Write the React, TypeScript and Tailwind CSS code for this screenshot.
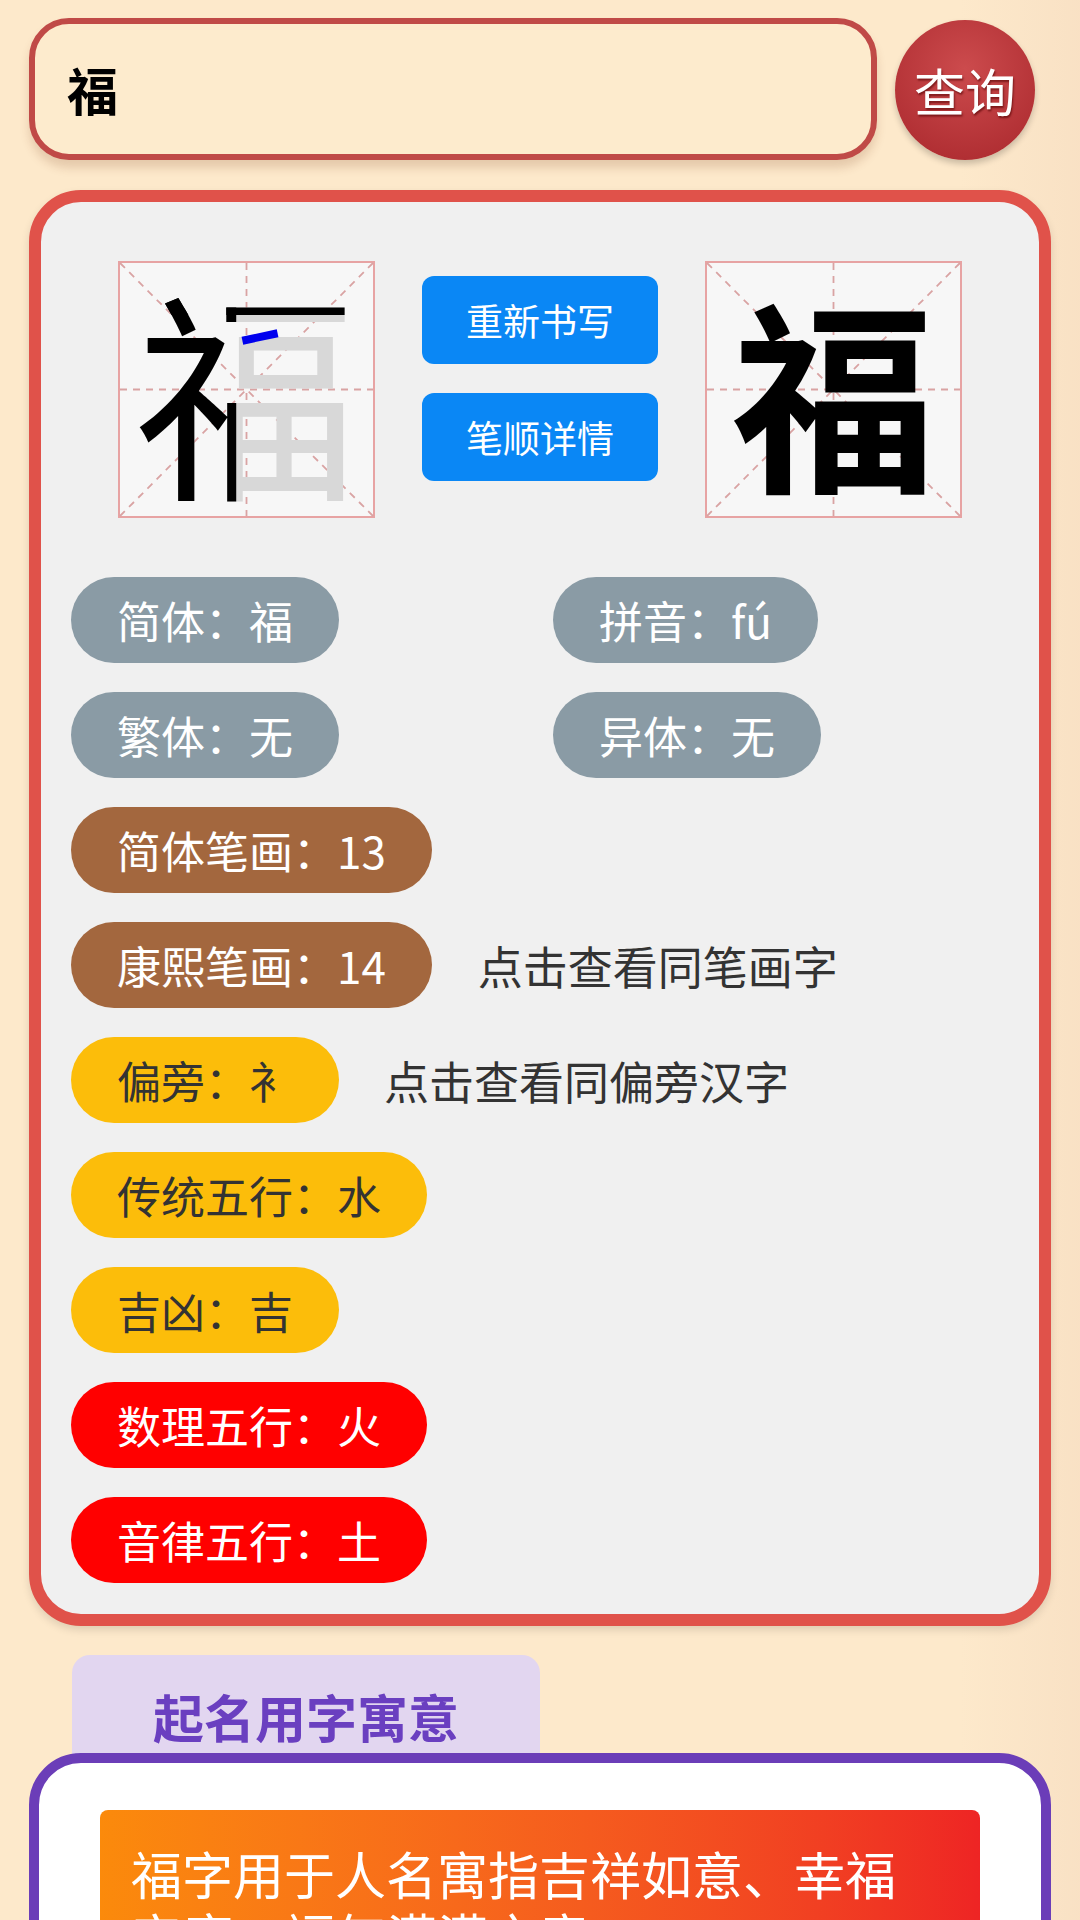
import React from "react";

function GridBox({ children }: { children?: React.ReactNode }) {
  return (
    <div className="relative w-[257px] h-[257px] bg-[#f7f7f7] shrink-0">
      <svg className="absolute inset-0" width="257" height="257" viewBox="0 0 257 257">
        <rect x="1" y="1" width="255" height="255" fill="none" stroke="#e7a3a3" strokeWidth="2" />
        <g stroke="#d9a3a3" strokeWidth="1.8" strokeDasharray="7 6" fill="none">
          <line x1="2" y1="2" x2="255" y2="255" />
          <line x1="255" y1="2" x2="2" y2="255" />
          <line x1="128.5" y1="2" x2="128.5" y2="255" />
          <line x1="2" y1="128.5" x2="255" y2="128.5" />
        </g>
      </svg>
      {children}
    </div>
  );
}

function Pill({ text, color, dark }: { text: string; color: string; dark?: boolean }) {
  return (
    <div
      className={
        "h-[86px] rounded-full px-[46px] flex items-center text-[44px] leading-none whitespace-nowrap " +
        color +
        (dark ? " text-[#333333]" : " text-white")
      }
    >
      {text}
    </div>
  );
}

export default function App() {
  return (
    <div className="w-[1080px] h-[1920px] overflow-hidden bg-[#fde9cb] font-['Noto_Sans_CJK_SC','Noto_Sans',sans-serif] relative">
      {/* faint painting texture on right edge */}
      <div className="absolute right-0 top-0 w-[120px] h-[1920px] bg-gradient-to-l from-[#f6dcc0] to-transparent opacity-60" />

      <div className="relative px-[29px] pt-[18px]">
        {/* search row */}
        <div className="flex items-start gap-[18px]">
          <div className="w-[848px] h-[142px] rounded-[40px] border-[6px] border-[#c04a47] bg-[#fdebcd] shadow-[0_8px_10px_rgba(120,60,30,0.18)] flex items-center pl-[32px]">
            <span className="text-[51px] font-bold text-black leading-none">福</span>
          </div>
          <div className="mt-[2px] w-[140px] h-[140px] rounded-full bg-[radial-gradient(circle_at_50%_35%,#cc4b4d,#a9272c)] shadow-[0_4px_6px_rgba(0,0,0,0.2)] flex items-center justify-center">
            <span className="text-[51px] text-white leading-none [text-shadow:1px_2px_2px_rgba(80,0,0,0.6)]">查询</span>
          </div>
        </div>

        {/* main card */}
        <div className="mt-[30px] h-[1436px] rounded-[52px] border-[12px] border-[#e0524a] bg-[#f0f0f0] shadow-[0_4px_8px_rgba(0,0,0,0.12)]">
          <div className="flex justify-between px-[77px] pt-[59px]">
            <GridBox>
              <div className="absolute inset-0 flex items-center justify-center text-[222px] leading-none text-[#d8d8d8]">
                <span className="-mt-[8px]">福</span>
              </div>
              <div className="absolute inset-0 flex items-center justify-center text-[222px] leading-none text-black [clip-path:inset(0_54%_0_0)]">
                <span className="-mt-[8px]">福</span>
              </div>
              <div className="absolute inset-0 flex items-center justify-center text-[222px] leading-none text-black [clip-path:inset(0_0_79%_0)]">
                <span className="-mt-[8px]">福</span>
              </div>
              <div className="absolute left-[124px] top-[72px] w-[36px] h-[8px] bg-[#0000ee] -rotate-[12deg]" />
            </GridBox>

            <div className="flex flex-col gap-[29px] pt-[15px]">
              <div className="w-[236px] h-[88px] rounded-[12px] bg-[#0a87f5] flex items-center justify-center text-white text-[37px] leading-none">
                重新书写
              </div>
              <div className="w-[236px] h-[88px] rounded-[12px] bg-[#0a87f5] flex items-center justify-center text-white text-[37px] leading-none">
                笔顺详情
              </div>
            </div>

            <GridBox>
              <div className="absolute inset-0 flex items-center justify-center text-[204px] leading-none font-bold text-black">
                <span className="-mt-[4px]">福</span>
              </div>
            </GridBox>
          </div>

          <div className="mt-[59px] pl-[30px] flex flex-col gap-[29px]">
            <div className="grid grid-cols-[482px_auto]">
              <div className="flex">
                <Pill text="简体：福" color="bg-[#8a9ba5]" />
              </div>
              <div className="flex">
                <Pill text="拼音：fú" color="bg-[#8a9ba5]" />
              </div>
            </div>
            <div className="grid grid-cols-[482px_auto]">
              <div className="flex">
                <Pill text="繁体：无" color="bg-[#8a9ba5]" />
              </div>
              <div className="flex">
                <Pill text="异体：无" color="bg-[#8a9ba5]" />
              </div>
            </div>
            <div className="flex">
              <Pill text="简体笔画：13" color="bg-[#a3673e]" />
            </div>
            <div className="flex items-center gap-[46px]">
              <Pill text="康熙笔画：14" color="bg-[#a3673e]" />
              <span className="text-[45px] text-[#333333] leading-none">点击查看同笔画字</span>
            </div>
            <div className="flex items-center gap-[45px]">
              <Pill text="偏旁：衤" color="bg-[#fcbd0a]" dark />
              <span className="text-[45px] text-[#333333] leading-none">点击查看同偏旁汉字</span>
            </div>
            <div className="flex">
              <Pill text="传统五行：水" color="bg-[#fcbd0a]" dark />
            </div>
            <div className="flex">
              <Pill text="吉凶：吉" color="bg-[#fcbd0a]" dark />
            </div>
            <div className="flex">
              <Pill text="数理五行：火" color="bg-[#ff0000]" />
            </div>
            <div className="flex">
              <Pill text="音律五行：土" color="bg-[#ff0000]" />
            </div>
          </div>
        </div>

        {/* tab */}
        <div className="mt-[29px] ml-[43px] w-[468px] h-[110px] rounded-t-[18px] bg-[#e2d6f0] flex items-start justify-center pt-[36px]">
          <span className="text-[51px] font-bold text-[#6a3fc0] leading-none">起名用字寓意</span>
        </div>

        {/* meaning card */}
        <div className="-mt-[12px] relative rounded-[52px] border-[10px] border-[#6b3db8] bg-white h-[400px] px-[61px] pt-[47px]">
          <div className="rounded-[8px] bg-gradient-to-r from-[#fb8a0b] to-[#ee2424] px-[31px] pt-[32px] pb-[30px] text-white text-[51px] leading-[62px]">
            <div>福字用于人名寓指吉祥如意、幸福</div>
            <div>安康、福气满满之意。</div>
          </div>
        </div>
      </div>
    </div>
  );
}
